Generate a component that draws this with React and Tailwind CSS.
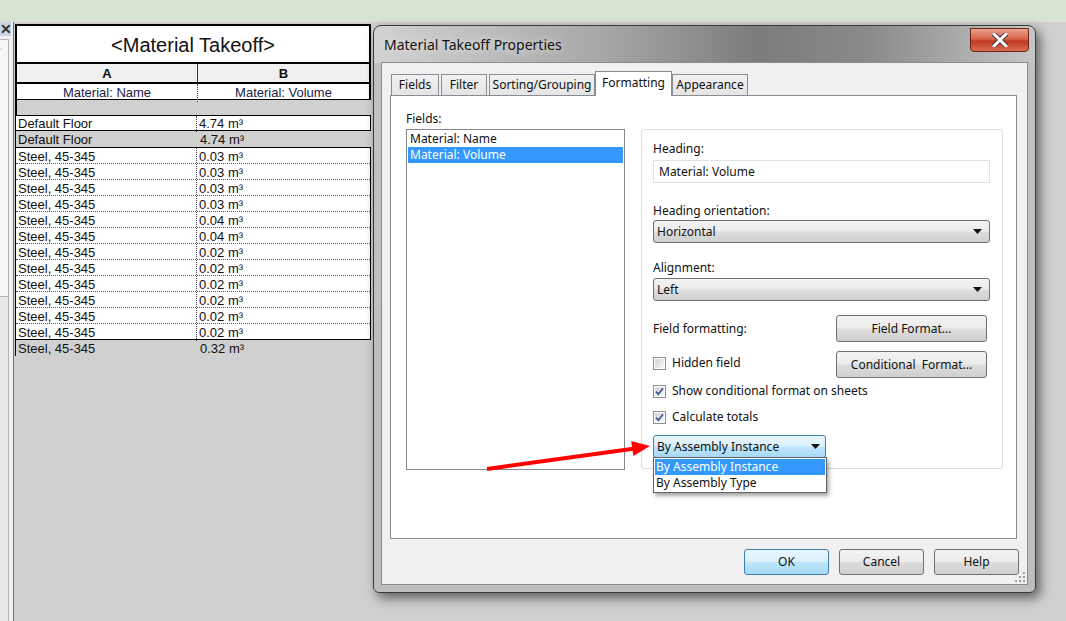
import React from "react";

// schedule data
const steelVolumes = ["0.03", "0.03", "0.03", "0.03", "0.04", "0.04", "0.02", "0.02", "0.02", "0.02", "0.02", "0.02"];

const winBtn = "bg-[linear-gradient(180deg,#f3f3f3_0%,#ebebeb_48%,#dddddd_52%,#cfcfcf_100%)] border border-[#707070] rounded-[3px]";
const blueBtn = "bg-[linear-gradient(180deg,#eaf6fd_0%,#d9f0fc_48%,#bee6fd_52%,#a7d9f5_100%)] border border-[#3c7fb1] rounded-[3px]";

function Arrow() {
  return (
    <svg width="9" height="5" viewBox="0 0 9 5">
      <path d="M0 0 H9 L4.5 5 Z" fill="#111" />
    </svg>
  );
}

function Check({ checked }) {
  return (
    <span className="flex h-[13px] w-[13px] shrink-0 border border-[#8e8f8f] bg-white p-px">
      <span className="flex h-full w-full items-center justify-center bg-[linear-gradient(135deg,#d2d2d2,#f9f9f9)]">
        {checked && (
          <svg width="9" height="9" viewBox="0 0 9 9">
            <path d="M1 4.6 L3.4 7.2 L8 1.2" fill="none" stroke="#3f5692" strokeWidth="1.8" />
          </svg>
        )}
      </span>
    </span>
  );
}

function Select({ text }) {
  return (
    <div className={`flex h-[23px] items-center justify-between pl-[3px] pr-[7px] ${winBtn}`}>
      <span className="text-[#111]">{text}</span>
      <Arrow />
    </div>
  );
}

function Schedule() {
  return (
    <div className="w-[356px] pt-[2px] font-['Liberation_Sans',Arial,sans-serif] text-[13px] leading-[16px] text-[#111]">
      <div className="flex h-[40px] items-center justify-center border-2 border-black bg-white pt-[2px] text-[20px] text-[#111]">
        &lt;Material Takeoff&gt;
      </div>
      <div className="grid h-[20px] grid-cols-[181px_1fr] border-x-2 border-b-2 border-black bg-[#f0f0f0] font-bold">
        <div className="border-r border-[#333] text-center leading-[19px]">A</div>
        <div className="text-center leading-[19px]">B</div>
      </div>
      <div className="grid h-[16px] grid-cols-[181px_1fr] border-x-2 border-b border-black bg-white text-[#1b1b4a]">
        <div className="border-r border-dotted border-[#444] text-center leading-[18px]">Material: Name</div>
        <div className="text-center leading-[18px]">Material: Volume</div>
      </div>
      <div className="h-[15px] border-l-2 border-black" />
      <div className="grid h-[16px] grid-cols-[181px_1fr] border border-black bg-white leading-[16px]">
        <div className="border-r border-dotted border-[#444] pl-[2px]">Default Floor</div>
        <div className="pl-[2px]">4.74 m³</div>
      </div>
      <div className="grid h-[16px] grid-cols-[181px_1fr] border-l border-black leading-[17px]">
        <div className="pl-[2px]">Default Floor</div>
        <div className="pl-[3px]">4.74 m³</div>
      </div>
      <div className="border-x border-t border-black bg-white">
        {steelVolumes.map((v, i) => (
          <div
            key={i}
            className={`grid h-[16px] grid-cols-[181px_1fr] leading-[17px] ${i < steelVolumes.length - 1 ? "border-b border-dotted border-[#555]" : "border-b border-black"}`}
          >
            <div className="border-r border-dotted border-[#444] pl-[2px]">Steel, 45-345</div>
            <div className="pl-[2px]">{v} m³</div>
          </div>
        ))}
      </div>
      <div className="grid h-[16px] grid-cols-[181px_1fr] border-l border-black leading-[17px]">
        <div className="pl-[2px]">Steel, 45-345</div>
        <div className="pl-[3px]">0.32 m³</div>
      </div>
    </div>
  );
}

function Tab({ label, w, active }) {
  if (active) {
    return (
      <div
        className={`z-10 -mb-px flex h-[25px] items-start justify-center border border-b-0 border-[#898c95] bg-white pt-[3px] text-[#111] ${w}`}
      >
        {label}
      </div>
    );
  }
  return (
    <div
      className={`flex h-[21px] items-center justify-center border border-b-0 border-[#898c95] bg-[linear-gradient(180deg,#f2f2f2,#e4e4e4)] text-[#111] ${w}`}
    >
      {label}
    </div>
  );
}

function Dialog() {
  return (
    <div className="absolute left-[373px] top-[25px] h-[568px] w-[663px] rounded-t-[8px] rounded-b-[6px] border border-[#3a3a3a] bg-[linear-gradient(180deg,transparent_0,transparent_37px,#c2c2c2_37px,#bdbdbd_100%),linear-gradient(90deg,#d2d2d2_0%,#a6a6a6_35%,#7c7c7c_58%,#8a8a8a_75%,#c6c6c6_100%)] shadow-[4px_5px_12px_rgba(0,0,0,0.55)] font-['Noto_Sans','Liberation_Sans',sans-serif] text-[12px] leading-[16px]">
      <div className="flex h-[36px] items-center justify-between pl-[10px] pr-[6px]">
        <div className="mt-[2px] text-[14px] text-[#111] [text-shadow:0_0_8px_rgba(255,255,255,0.9)]">Material Takeoff Properties</div>
        <div className="-mt-[8px] flex h-[24px] w-[59px] items-center justify-center rounded-b-[4px] border border-[#6b2417] bg-[linear-gradient(180deg,#eaa08e_0%,#d7654b_45%,#c0391f_55%,#d86d52_100%)]">
          <svg width="16" height="14" viewBox="0 0 16 14">
            <path d="M2 1 L14 13 M14 1 L2 13" stroke="#4a3a3a" strokeWidth="5" strokeLinecap="square" />
            <path d="M2 1 L14 13 M14 1 L2 13" stroke="#fff" strokeWidth="3" strokeLinecap="square" />
          </svg>
        </div>
      </div>
      {/* client area */}
      <div className="relative mx-[7px] h-[523px] border border-[#8a8a8a] bg-[#f0f0f0]">
        <div className="ml-[9px] mt-[8px] flex h-[24px] items-end">
          <Tab label="Fields" w="w-[48px]" />
          <div className="w-[2px]" />
          <Tab label="Filter" w="w-[46px]" />
          <div className="w-[2px]" />
          <Tab label="Sorting/Grouping" w="w-[106px]" />
          <Tab label="Formatting" w="w-[77px]" active />
          <Tab label="Appearance" w="w-[76px]" />
        </div>
        <div className="ml-[8px] flex h-[444px] w-[627px] gap-[16px] border border-[#898c95] bg-white pl-[15px] pt-[15px]">
          <div className="flex w-[219px] flex-col">
            <div className="mb-[2px] h-[16px] text-[#111]">Fields:</div>
            <div className="h-[341px] border border-[#828790] bg-white p-px">
              <div className="pl-[2px] text-[#111]">Material: Name</div>
              <div className="bg-[#3399ff] pl-[2px] text-white">Material: Volume</div>
            </div>
          </div>
          <div className="flex w-[362px] flex-col pt-[18px]">
            <div className="h-[340px] rounded-[3px] border border-[#d5dfe5] pl-[11px] pr-[12px] pt-[11px] text-[#111]">
              <div>Heading:</div>
              <div className="mt-[3px] flex h-[23px] items-center border border-[#e0e3e6] pl-[5px]">Material: Volume</div>
              <div className="mt-[20px]">Heading orientation:</div>
              <div className="mt-px">
                <Select text="Horizontal" />
              </div>
              <div className="mt-[17px]">Alignment:</div>
              <div className="mt-[2px]">
                <Select text="Left" />
              </div>
              <div className="mt-[14px] flex h-[27px] items-center justify-between pr-[3px]">
                <span>Field formatting:</span>
                <div className={`flex h-[27px] w-[151px] items-center justify-center ${winBtn}`}>Field Format...</div>
              </div>
              <div className="mt-[9px] flex h-[27px] items-center justify-between pr-[3px]">
                <span className="-mt-[3px] flex items-center gap-[6px]">
                  <Check />
                  Hidden field
                </span>
                <div className={`flex h-[27px] w-[151px] items-center justify-center whitespace-pre ${winBtn}`}>Conditional  Format...</div>
              </div>
              <div className="mt-[5px] flex h-[16px] items-center gap-[6px]">
                <Check checked />
                Show conditional format on sheets
              </div>
              <div className="mt-[10px] flex h-[16px] items-center gap-[6px]">
                <Check checked />
                Calculate totals
              </div>
              <div className="relative mt-[10px] w-[173px]">
                <div className={`flex h-[23px] items-center justify-between pl-[3px] pr-[5px] ${blueBtn}`}>
                  <span>By Assembly Instance</span>
                  <Arrow />
                </div>
                <div className="absolute left-0 top-[22px] z-20 w-[174px] border border-[#646464] bg-white p-px shadow-[2px_3px_4px_rgba(0,0,0,0.35)]">
                  <div className="h-[16px] bg-[#3399ff] pl-px text-white">By Assembly Instance</div>
                  <div className="h-[16px] pl-px text-[#111]">By Assembly Type</div>
                </div>
              </div>
            </div>
          </div>
        </div>
        <div className="flex justify-end gap-[10px] pr-[8px] pt-[10px]">
          <div className={`flex h-[26px] w-[85px] items-center justify-center text-[#111] ${blueBtn}`}>OK</div>
          <div className={`flex h-[26px] w-[85px] items-center justify-center text-[#111] ${winBtn}`}>Cancel</div>
          <div className={`flex h-[26px] w-[85px] items-center justify-center text-[#111] ${winBtn}`}>Help</div>
        </div>
        <svg className="absolute bottom-[1px] right-[1px]" width="11" height="11" viewBox="0 0 11 11">
          {[[8, 0], [8, 4], [4, 4], [8, 8], [4, 8], [0, 8]].map(([x, y], i) => (
            <rect key={i} x={x} y={y} width="2" height="2" fill="#a0a0a0" />
          ))}
        </svg>
      </div>
    </div>
  );
}

function RedArrow() {
  return (
    <svg className="absolute left-[480px] top-[435px] z-30" width="175" height="40" viewBox="0 0 175 40">
      <line x1="7" y1="34" x2="155" y2="13.4" stroke="#ff0000" strokeWidth="4" />
      <polygon points="170,11 151.2,6 153.4,21" fill="#ff0000" />
    </svg>
  );
}

export default function App() {
  return (
    <div className="relative h-[621px] w-[1066px] overflow-hidden bg-[#d0d0d0]">
      <div className="h-[22px] bg-[#d9e3d3]" />
      <div className="flex h-[599px]">
        {/* left dock strip */}
        <div className="flex w-[14px] flex-col border-r border-[#6f6f6f] bg-[#f0f0f0]">
          <div className="flex h-[26px] w-[11px] items-center justify-center bg-[#c6d6e6] text-[14px] font-bold leading-none text-[#333]">
            ✕
          </div>
          <div className="mt-[3px] h-[468px] w-[9px] border-r border-t border-[#b4b4b4] bg-[#f6f6f6] pt-[8px] text-[8px] leading-none text-[#aaa]">
            ˄
          </div>
          <div className="h-full w-[9px] border-r border-t border-[#b4b4b4] bg-[#e8e8e8]" />
        </div>
        <div className="flex-1 pl-[1px]">
          <Schedule />
        </div>
      </div>
      <Dialog />
      <RedArrow />
    </div>
  );
}
